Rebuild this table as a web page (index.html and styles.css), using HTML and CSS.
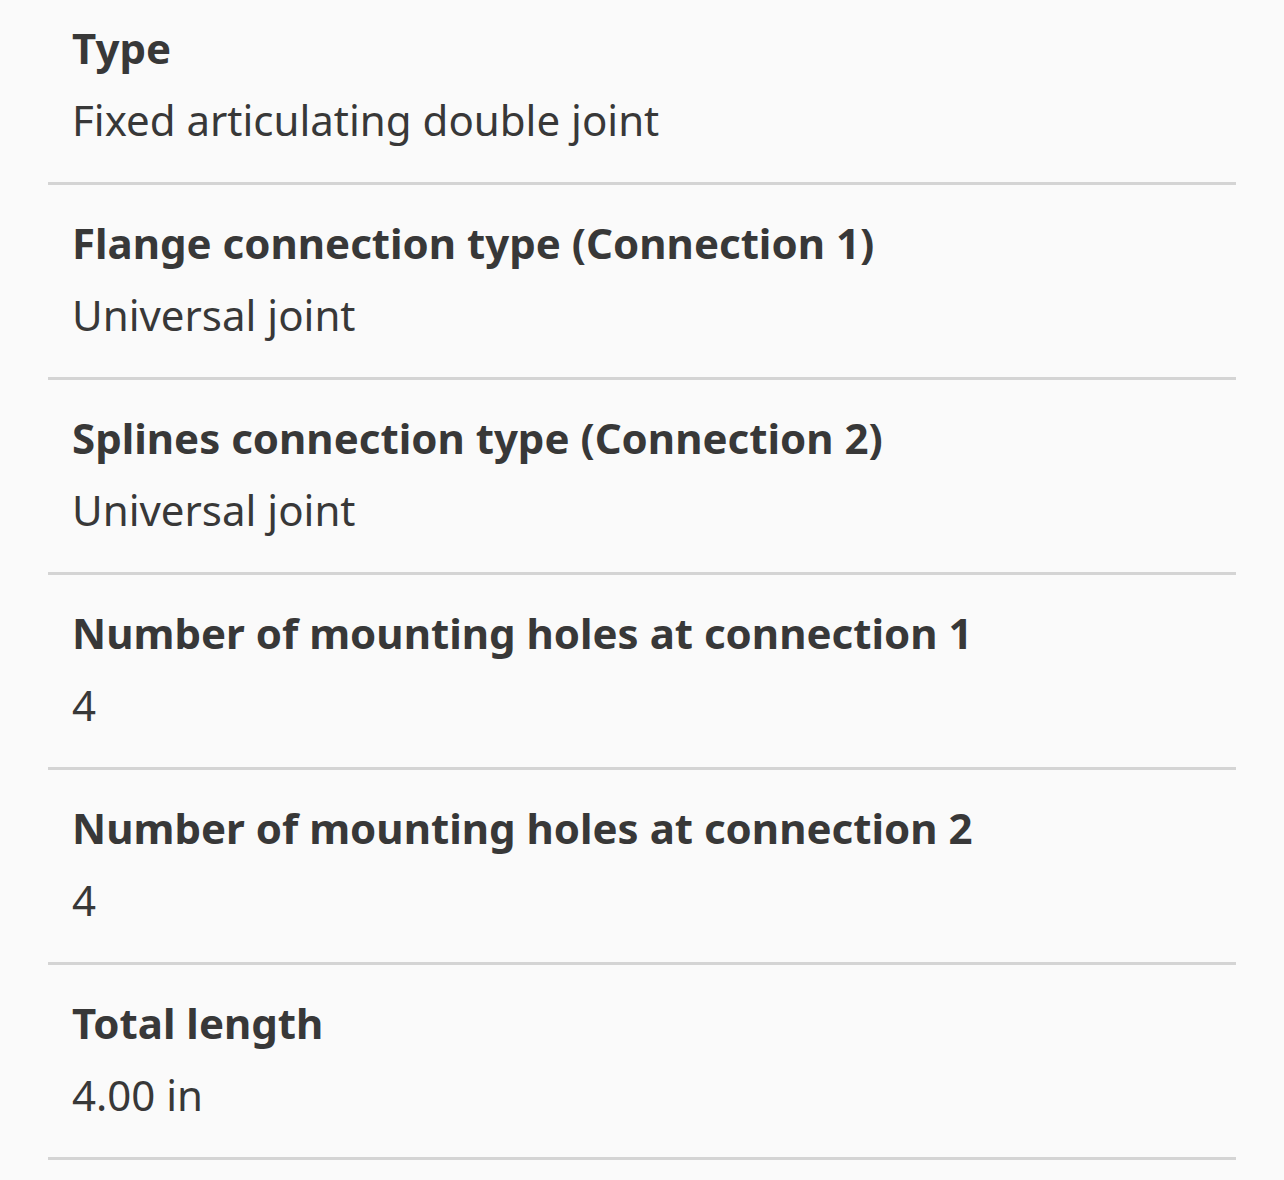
FILE: index.html
```html
<!DOCTYPE html>
<html lang="en">
<head>
	<meta charset="utf-8">
	<title>Specifications</title>
	<link rel="stylesheet" href="styles.css">
</head>
<body>

<dl class="specs">
    <div class="spec">
        <dt>Type</dt>
        <dd>Fixed articulating double joint</dd>
    </div>
    <div class="spec">
        <dt>Flange connection type (Connection 1)</dt>
        <dd>Universal joint</dd>
    </div>
    <div class="spec">
        <dt>Splines connection type (Connection 2)</dt>
        <dd>Universal joint</dd>
    </div>
    <div class="spec">
        <dt>Number of mounting holes at connection 1</dt>
        <dd>4</dd>
    </div>
    <div class="spec">
        <dt>Number of mounting holes at connection 2</dt>
        <dd>4</dd>
    </div>
    <div class="spec">
        <dt>Total length</dt>
        <dd>4.00 in</dd>
    </div>
</dl>

</body>
</html>
```
FILE: styles.css
```css
html, body { margin: 0; padding: 0; }
body {
    background: #fafafa;
    color: #383838;
    font-family: "Noto Sans", "Open Sans", sans-serif;
}
.specs {
    margin: -10px 48px 0;
    padding: 0;
}
.spec {
    padding: 22px 25px 26px 24px;
    border-bottom: 3px solid #d4d4d4;
}
.spec dt {
    font-size: 42px;
    font-weight: 700;
    line-height: 72px;
}
.spec dd {
    margin: 0;
    font-size: 42px;
    line-height: 72px;
}
```
